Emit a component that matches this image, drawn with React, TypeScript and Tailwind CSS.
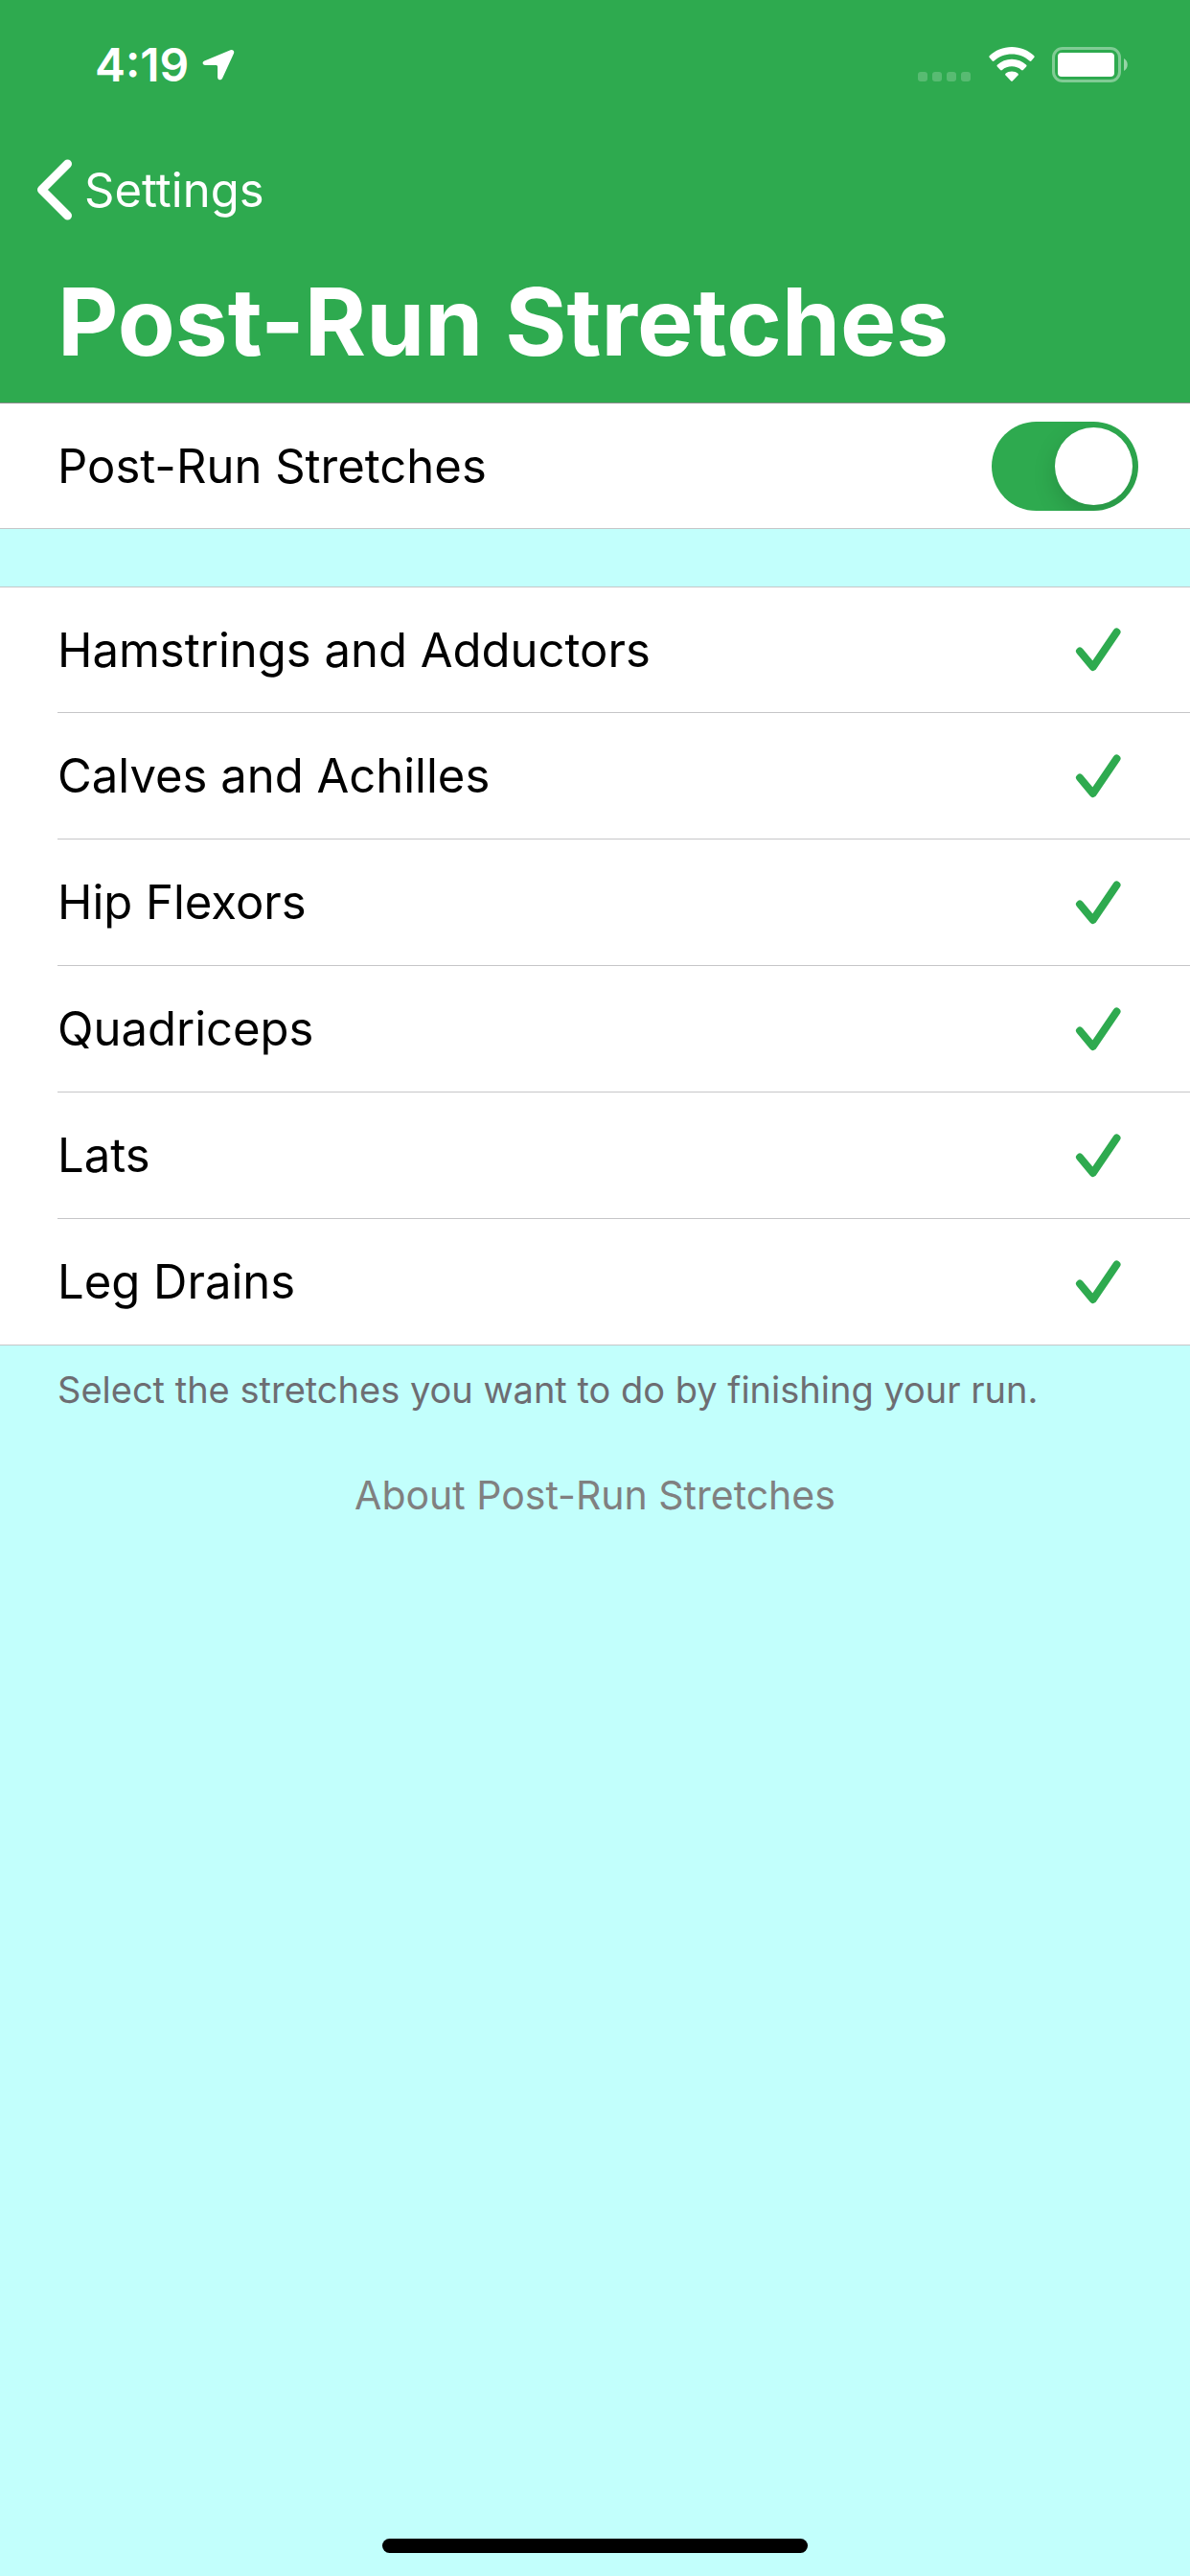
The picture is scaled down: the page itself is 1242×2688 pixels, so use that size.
import { useState } from 'react';
import clsx from 'clsx';

const stretches = [
  'Hamstrings and Adductors',
  'Calves and Achilles',
  'Hip Flexors',
  'Quadriceps',
  'Lats',
  'Leg Drains',
];

function StatusBar() {
  return (
    <div className="flex h-[132px] items-center justify-between pt-1 pr-16 pl-[99px] text-white">
      <div className="flex items-center gap-3.5">
        <span className="text-[48px] leading-none font-semibold">4:19</span>
        <svg width="34" height="32" viewBox="0 0 34 32" fill="currentColor" aria-hidden="true">
          <path d="M29.5 .3C32 -.6 34 1.3 33 3.8L21.2 29.6C20.2 32.3 16.2 31.8 16.1 28.8V17.6Q16.1 16.1 14.6 16.1H3.2C.2 16 -.4 12.6 2.4 11.5Z" />
        </svg>
      </div>

      <div className="flex items-center">
        <svg width="56" height="38" viewBox="0 0 56 38" fill="currentColor" opacity="0.2" aria-hidden="true">
          <rect x="0" y="26" width="10" height="10" rx="3" />
          <rect x="15" y="26" width="10" height="10" rx="3" />
          <rect x="30" y="26" width="10" height="10" rx="3" />
          <rect x="45" y="26" width="10" height="10" rx="3" />
        </svg>
        <svg className="ml-[17px]" width="50" height="38" viewBox="0 0 50 38" fill="currentColor" aria-hidden="true">
          <path d="M25 0C34 0 42.5 3.5 48.3 9.3Q49.2 10.2 48.3 11.1L45.4 14.6Q44.5 15.5 43.5 14.6C38.5 10 32 7.6 25 7.6S11.5 10 6.5 14.6Q5.5 15.5 4.6 14.6L1.7 11.1Q.8 10.2 1.7 9.3C7.5 3.5 16 0 25 0Z" />
          <path d="M25 12.8C30.8 12.8 36 15 40.2 18.7Q41 19.5 40.2 20.4L36.9 24Q36 24.8 35 24C32.2 21.6 28.8 20.3 25 20.3S17.8 21.6 15 24Q14 24.8 13.1 24L9.8 20.4Q9 19.5 9.8 18.7C14 15 19.2 12.8 25 12.8Z" />
          <path d="M25 25.5C27.5 25.5 29.7 26.3 31.5 27.8Q32.3 28.6 31.5 29.5L25.8 35.4Q25 36.2 24.2 35.4L18.5 29.5Q17.7 28.6 18.5 27.8C20.3 26.3 22.5 25.5 25 25.5Z" />
        </svg>
        <svg className="ml-[17px]" width="80" height="38" viewBox="0 0 80 38" fill="none" aria-hidden="true">
          <rect x="1.5" y="1.5" width="69" height="34" rx="9.5" stroke="white" strokeOpacity="0.4" strokeWidth="3" />
          <rect x="6" y="6" width="59" height="25" rx="4" fill="white" />
          <path d="M75 12C80 14.5 80 22.5 75 25Z" fill="white" fillOpacity="0.5" />
        </svg>
      </div>
    </div>
  );
}

type StretchRowProps = {
  label: string;
  checked: boolean;
  onToggle: () => void;
};

function StretchRow({ label, checked, onToggle }: StretchRowProps) {
  return (
    <li className="group pl-[60px]">
      <label className="flex h-[132px] items-center justify-between border-b border-[#c6c6c8] pr-[72px] group-first:h-[131px] group-last:h-[131px] group-last:border-0">
        <span className="text-[49px] leading-none">{label}</span>
        <input type="checkbox" className="sr-only" checked={checked} onChange={onToggle} />
        <svg
          className={clsx('shrink-0', !checked && 'invisible')}
          width="48"
          height="46"
          viewBox="0 0 48 46"
          fill="none"
          stroke="#2eaa4f"
          strokeWidth="8"
          strokeLinecap="round"
          strokeLinejoin="round"
          aria-hidden="true"
        >
          <path d="M5 24.5L18.7 41L43.5 4.5" />
        </svg>
      </label>
    </li>
  );
}

export default function App() {
  const [enabled, setEnabled] = useState(true);
  const [selected, setSelected] = useState<string[]>(stretches);

  const toggle = (name: string) =>
    setSelected((prev) => (prev.includes(name) ? prev.filter((s) => s !== name) : [...prev, name]));

  return (
    <div className="flex min-h-screen flex-col bg-[#c2fffc] font-['Inter',sans-serif] text-black">
      <header className="border-b border-[#8b8b8b] bg-[#2eaa4f] text-white">
        <StatusBar />
        <nav className="flex h-[132px] items-center pl-[38px]">
          <button type="button" className="flex items-center gap-3">
            <svg width="38" height="64" viewBox="0 0 38 64" fill="none" stroke="currentColor" strokeWidth="9" strokeLinecap="round" strokeLinejoin="round" aria-hidden="true">
              <path d="M32.5 5L5.5 32L32.5 59" />
            </svg>
            <span className="text-[49px] leading-none">Settings</span>
          </button>
        </nav>
        <h1 className="flex h-[156px] items-center pb-3 pl-[60px] text-[98px] leading-none font-bold">
          Post-Run Stretches
        </h1>
      </header>

      <main className="flex-1">
        <label className="flex h-[131px] items-center justify-between border-b border-[#c6c6c8] bg-white pr-[54px] pl-[60px]">
          <span className="text-[49px] leading-none">Post-Run Stretches</span>
          <input
            type="checkbox"
            role="switch"
            checked={enabled}
            onChange={(e) => setEnabled(e.target.checked)}
            className="flex h-[93px] w-[153px] shrink-0 appearance-none items-center overflow-hidden rounded-full bg-gray-200 px-1.5 before:size-[81px] before:rounded-full before:bg-white before:shadow-[0_9px_24px_rgba(0,0,0,0.15)] checked:justify-end checked:bg-[#2eaa4f]"
          />
        </label>

        {/* Stretch list */}
        <ul className="mt-[60px] border-y border-[#c6c6c8] bg-white">
          {stretches.map((name) => (
            <StretchRow
              key={name}
              label={name}
              checked={selected.includes(name)}
              onToggle={() => toggle(name)}
            />
          ))}
        </ul>

        <p className="px-[60px] pt-5 text-[38px] leading-[52px] text-[#6d6d72]">
          Select the stretches you want to do by finishing your run.
        </p>
        <div className="flex justify-center pt-14">
          <a href="#about" className="text-[41px] leading-[56px] text-[#808080]">
            About Post-Run Stretches
          </a>
        </div>
      </main>

      {/* Home indicator */}
      <div className="flex justify-center pb-6">
        <div className="h-[15px] w-[444px] rounded-full bg-black" />
      </div>
    </div>
  );
}
